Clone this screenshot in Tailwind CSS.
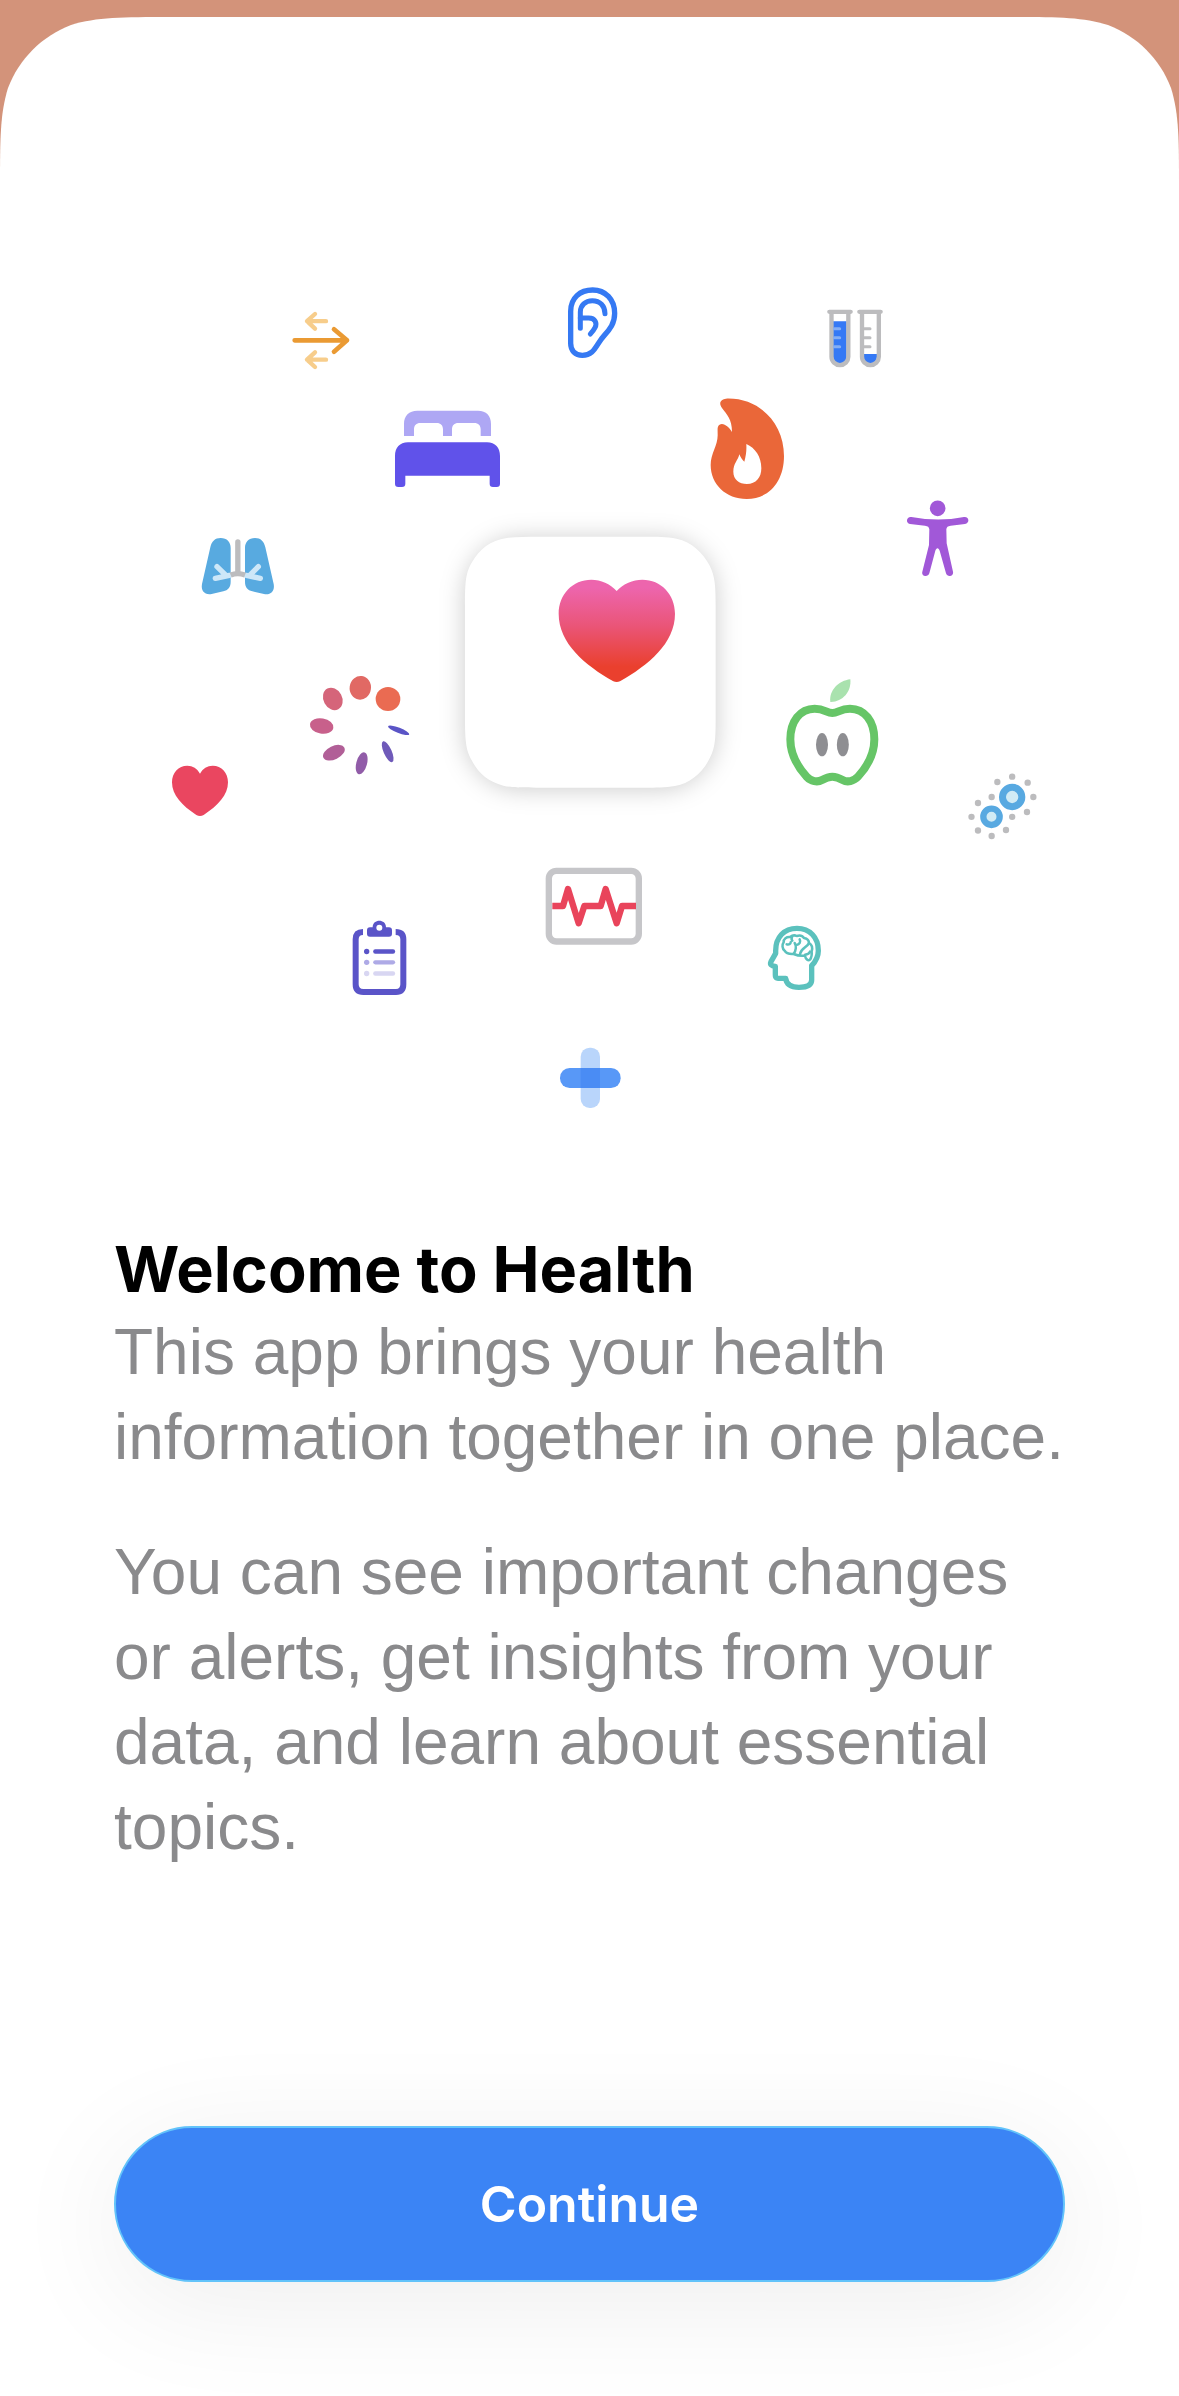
<!DOCTYPE html>
<html lang="en">
<head>
<meta charset="utf-8">
<meta name="viewport" content="width=device-width, initial-scale=1">
<title>Welcome to Health</title>
<script src="https://cdn.jsdelivr.net/npm/@tailwindcss/browser@4"></script>
</head>
<body class="flex min-h-screen flex-col bg-[#d3937a] pt-[17px] font-['Liberation_Sans',Arial,sans-serif]">
<main class="flex flex-1 flex-col">
  <!-- sheet top edge with continuous corners -->
  <div class="flex h-[171px]" aria-hidden="true">
    <svg class="h-[171px] w-[171px] shrink-0" viewBox="0 0 171 171"><path fill="#fff" d="M0 171C0 122 0 97 8 71C19 42 42 19 71 8C97 0 122 0 171 0V171Z"/></svg>
    <div class="flex-1 bg-white"></div>
    <svg class="h-[171px] w-[171px] shrink-0" viewBox="0 0 171 171"><path fill="#fff" d="M171 171C171 122 171 97 163 71C152 42 129 19 100 8C74 0 49 0 0 0V171Z"/></svg>
  </div>

  <div class="flex flex-1 flex-col bg-white">
    <!-- illustration: health categories around the app icon -->
    <svg class="block w-full" viewBox="0 188 1179 1028" role="img" aria-label="Health categories around the Health app icon">
      <defs>
        <linearGradient id="heart" x1="0" y1="0" x2="0" y2="1"><stop offset="0.08" stop-color="#ed65ad"/><stop offset="0.45" stop-color="#ea5578"/><stop offset="0.85" stop-color="#ea402e"/></linearGradient>
        <filter id="soft" x="-30%" y="-30%" width="160%" height="160%"><feGaussianBlur stdDeviation="36"/></filter>
      </defs>

      <!-- mobility arrows, ear, bed -->
      <g transform="translate(270 270) scale(.33333)" fill="none" stroke-linecap="round" stroke-linejoin="round">
        <g stroke="#f7cd8b" stroke-width="13"><path d="M168 153.500H112M135 132L111 153.500L135 176"/><path d="M168 269H112M135 247L111 269L135 291"/></g>
        <path stroke="#ea9a33" stroke-width="14" d="M74 211H231M192 178L231 211L192 245"/>
        <g stroke="#3579f3" stroke-width="16">
          <path d="M902 124C902 84 930 60 968 60C1006 60 1034 88 1034 130C1034 160 1020 178 1003 196C978 222 975 256 937 256C916 256 902 242 902 220Z"/>
          <path stroke-width="15" d="M931 175V126C931 106 946 92 967 92C990 92 1005 108 1005 131"/>
          <path stroke-width="15" d="M931 144H956C976 144 982 160 975 173C971 181 967 186 961 192"/>
        </g>
        <path fill="#aea7f4" d="M402 498V462C402 437 417 422 442 422H624C649 422 663 437 663 462V498H632V478C632 466 625 459 613 459H565C553 459 546 466 546 478V498H519V478C519 466 512 459 500 459H451C439 459 432 466 432 478V498Z"/>
        <path fill="#6052ea" d="M375 558C375 533 389 517 414 517H651C676 517 690 533 690 558V641Q690 651 680 651H669Q659 651 659 641V617H406V641Q406 651 396 651H385Q375 651 375 641Z"/>
      </g>

      <!-- test tubes, flame, figure -->
      <g transform="translate(680 280) scale(.33333)">
        <path fill="#3579f5" d="M459 124H500V231A20 20 0 0 1 459 231Z"/>
        <path fill="#3579f5" d="M551 222H591V231A20 20 0 0 1 551 231Z"/>
        <g fill="none" stroke="#bcbcbe" stroke-width="13">
          <path d="M454.500 100V230A25 25 0 0 0 505 230V100M546 100V230A25 25 0 0 0 596.500 230V100"/>
          <path stroke-linecap="round" d="M448 95.500H512M538 95.500H602"/>
          <path stroke-width="9" stroke-linecap="round" d="M553 146H570M553 173H570M553 200H570"/>
        </g>
        <path fill="none" stroke="#84aef5" stroke-width="9" stroke-linecap="round" d="M463 146H479M463 173H479M463 200H479"/>
        <path fill="#ea6739" fill-rule="evenodd" d="M138 356C236 352 312 428 312 528C312 604 268 657 200 657C138 657 92 613 92 555C92 520 114 496 113 464C113 452 112 444 114 440C117 431 127 430 134 434C145 440 151 447 156 456C156 418 141 404 126 384C114 368 124 357 138 356ZM199 492C200 512 198 526 193 545C187 540 182 532 178 523C174 542 160 550 160 575C160 598 177 612 201 612C228 612 244 593 244 565C244 530 226 504 199 492Z"/>
        <g fill="#a158d8"><circle cx="773" cy="685" r="23.500"/>
        <path d="M694 711C750 721 800 721 852 711C868 709 870 729 855 732L812 737C803 738 800 741 799 748L800 790L819 875C822 889 802 893 798 880L779 812C776 802 769 802 766 812L748 880C744 893 723 889 727 875L747 795L748 748C747 741 744 738 735 737L690 732C676 729 679 709 694 711Z"/></g>
      </g>

      <!-- lungs, ring of dots, heart -->
      <g transform="translate(160 500) scale(.33333)">
        <path fill="#58aae0" d="M182 114C201 114 212 126 212 144V245C212 262 204 270 190 274L155 282C135 286 122 273 126 252L151 142C155 124 165 114 182 114Z"/>
        <path fill="#58aae0" d="M285 114C266 114 255 126 255 144V245C255 262 263 270 277 274L312 282C332 286 345 273 341 252L316 142C312 124 302 114 285 114Z"/>
        <g fill="none" stroke-linecap="round" stroke-width="16">
          <path stroke="#cde7f8" d="M166 235L208 226M171 200L198 226M301 235L259 226M295 200L269 226"/>
          <path stroke="#bcbcbe" d="M233.500 126V215"/>
          <path stroke="#bcbcbe" stroke-linecap="butt" d="M212 225Q233 217 255 225"/>
        </g>
        <ellipse cx="684" cy="597" rx="37" ry="36" fill="#ea6b52"/>
        <ellipse cx="601" cy="563.500" rx="32" ry="35.500" fill="#e16964" transform="rotate(8 601 563)"/>
        <ellipse cx="518.500" cy="597" rx="28" ry="35" fill="#d5657a" transform="rotate(-28 518 597)"/>
        <ellipse cx="485" cy="678" rx="35.500" ry="23" fill="#c8608b" transform="rotate(10 485 678)"/>
        <ellipse cx="521.500" cy="758.500" rx="35" ry="20" fill="#b15f97" transform="rotate(-26 521 758)"/>
        <ellipse cx="605" cy="790" rx="16" ry="34" fill="#915ca8" transform="rotate(15 605 790)"/>
        <ellipse cx="683" cy="755" rx="12" ry="34" fill="#6f5ab9" transform="rotate(-24 683 755)"/>
        <ellipse cx="716" cy="691" rx="34" ry="8" fill="#5a54c6" transform="rotate(21 716 691)"/>
        <path fill="#ea4660" d="M120 821C128 805 142 797 158 797C185 797 204 818 204 847C204 885 174 917 131 945Q120 951 109 945C66 917 36 885 36 847C36 818 55 797 82 797C98 797 112 805 120 821Z"/>
      </g>

      <!-- app icon -->
      <g transform="translate(440 510) scale(.33333)">
        <rect x="74" y="84" width="754" height="754" rx="170" fill="#000" fill-opacity=".2" filter="url(#soft)"/>
        <path fill="#fff" d="M75 290C75 220 76 190 95 158C120 116 150 92 200 84C230 80 260 80 290 80H612C650 80 680 80 710 86C755 95 790 130 808 165C826 200 827 230 827 290V623C827 690 826 715 806 751C785 790 750 820 705 828C675 833 650 833 612 833H290C240 833 215 833 190 827C145 815 115 790 95 751C77 718 75 690 75 623Z"/>
        <path fill="url(#heart)" d="M530 243C550 221 578 209 607 209C663 209 705 253 705 311C705 400 625 465 540 514Q530 518 520 514C435 465 356 400 356 311C356 253 398 209 454 209C483 209 510 221 530 243Z"/>
      </g>

      <!-- apple, cells, mind -->
      <g transform="translate(760 660) scale(.33333)">
        <path fill="#a9e2ae" d="M271 58C236 62 206 92 211 126C247 127 275 95 271 58Z"/>
        <path fill="none" stroke="#66c567" stroke-width="24" stroke-linejoin="round" d="M217 159C234 159 240 146 270 146C314 146 343 184 343 238C343 290 316 326 294 350C281 364 262 368 248 360C236 353 229 350 217 350C205 350 198 353 186 360C172 368 153 364 140 350C118 326 91 290 91 238C91 184 120 146 164 146C194 146 200 159 217 159Z"/>
        <g fill="#8e8e92"><ellipse cx="186" cy="254" rx="18" ry="35"/><ellipse cx="248.500" cy="254" rx="18" ry="35"/></g>
        <g fill="#d1ebf5" stroke="#58a9e1"><circle cx="756.500" cy="411" r="29" stroke-width="21"/><circle cx="694.500" cy="470.500" r="24.500" stroke-width="19"/></g>
        <g fill="#bcbcbe"><circle cx="756.500" cy="350" r="9.500"/><circle cx="712" cy="366" r="9.500"/><circle cx="803" cy="368" r="9.500"/><circle cx="695" cy="411" r="9.500"/><circle cx="820" cy="411" r="9.500"/><circle cx="654" cy="429" r="9.500"/><circle cx="801" cy="456" r="9.500"/><circle cx="634.500" cy="470.500" r="9.500"/><circle cx="756.500" cy="470.500" r="9.500"/><circle cx="654" cy="511.500" r="9.500"/><circle cx="738" cy="510" r="9.500"/><circle cx="695" cy="528" r="9.500"/></g>
        <g fill="none" stroke="#5bc1bd" stroke-linecap="round" stroke-linejoin="round">
          <path stroke-width="16" d="M77 955C79 975 94 982 117 982C142 982 155 976 155 960V917C168 903 175 890 175 872C175 832 149 805 111 805C72 805 47 832 47 872V880L33 905C29 913 34 918 46 919V945C46 957 52 955 77 955Z"/>
          <g stroke-width="7.500">
            <path d="M101 882C88 883 78 880 74 872C66 866 66 854 71 847C70 836 80 830 90 831C98 825 104 825 110 828C120 825 128 828 132 834C142 836 147 843 147 849C156 854 158 864 155 874C156 884 155 892 150 899C144 904 137 897 135 887C124 888 112 887 101 882"/>
            <path d="M96 832C94 836 94 839 97 842M80 853C87 855 92 852 92 847M104 849C110 858 108 872 101 881M119 838C123 846 119 853 109 855M147 849C142 862 124 864 120 882M135 884C142 883 148 880 150 875"/>
          </g>
        </g>
      </g>

      <!-- clipboard, ECG, plus -->
      <g transform="translate(330 840) scale(.33333)">
        <path fill="none" stroke="#5a54c8" stroke-width="18" d="M99 276C84 276 77 284 77 298V433C77 448 85 456 100 456H198C213 456 220 448 220 433V298C220 284 213 276 197 276"/>
        <path fill="#5a54c8" fill-rule="evenodd" d="M120 262H128C128 236 168 236 168 262H177Q186 262 186 271V281Q186 290 177 290H120Q111 290 111 281V271Q111 262 120 262ZM148 254A9 9 0 1 0 148 272A9 9 0 1 0 148 254Z"/>
        <g stroke-width="13" stroke-linecap="round">
          <g fill="#5a54c8" stroke="#5a54c8"><path d="M136 334.500H189"/><circle cx="110" cy="334.500" r="8" stroke="none"/></g>
          <g fill="#aeaae6" stroke="#aeaae6"><path d="M136 367H189"/><circle cx="110" cy="367" r="8" stroke="none"/></g>
          <g fill="#d8d6f2" stroke="#d8d6f2"><path d="M136 400.500H189"/><circle cx="110" cy="400.500" r="8" stroke="none"/></g>
        </g>
        <rect x="656.500" y="92.500" width="270" height="212" rx="23" fill="none" stroke="#c6c6c9" stroke-width="19"/>
        <path fill="none" stroke="#e9445b" stroke-width="19" stroke-linejoin="round" d="M667 198H699L714 147L746 250L763 198H812L827 147L860 250L876 198H918"/>
        <rect x="752" y="623" width="58" height="181" rx="27" fill="#b9d5fb"/>
        <rect x="690" y="684" width="182" height="60" rx="29" fill="#5898f7"/>
        <rect x="752" y="684" width="58" height="60" fill="#4a8cf4"/>
      </g>
    </svg>

    <section class="px-[114px]">
      <h1 class="pt-3 font-['Inter',sans-serif] text-[63px] leading-[82px] font-bold text-black">Welcome to Health</h1>
      <div class="space-y-[50px] text-[64px] leading-[85px] text-[#8a8a8c]">
        <p>This app brings your health information together in one place.</p>
        <p>You can see important changes or alerts, get insights from your data, and learn about essential topics.</p>
      </div>
    </section>

    <div class="mt-auto px-[114px] pt-16 pb-[114px]">
      <button type="button" class="block h-[156px] w-full rounded-full border-2 border-[#62c3fa] bg-[#3b84f5] font-['Inter',sans-serif] text-[50px] font-semibold text-white shadow-[0_20px_120px_rgba(0,0,0,0.07)]">Continue</button>
    </div>
  </div>
</main>
</body>
</html>
